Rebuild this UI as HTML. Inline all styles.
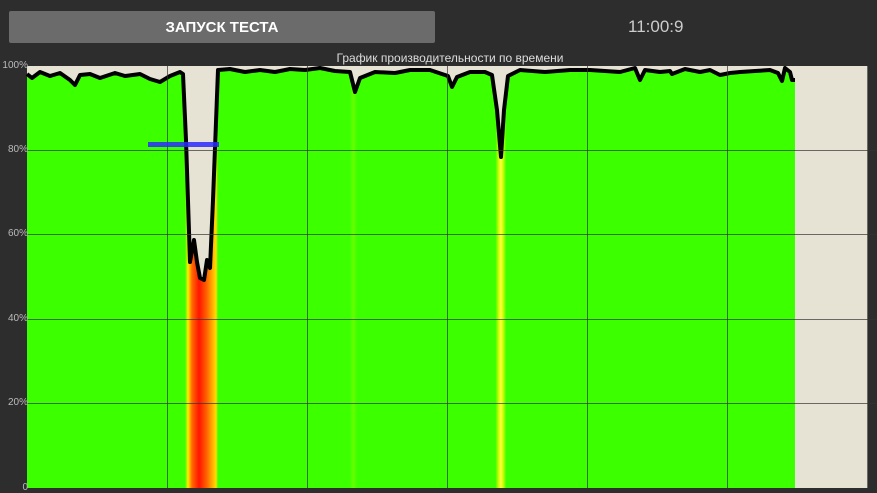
<!DOCTYPE html>
<html><head><meta charset="utf-8"><style>
html,body{margin:0;padding:0;background:#2d2d2d;width:877px;height:493px;overflow:hidden;font-family:"Liberation Sans","Noto Sans CJK SC",sans-serif}
.btn{position:absolute;left:9px;top:11px;width:426px;height:32px;background:#6b6b6b;border-radius:2px;color:#fff;font-weight:bold;font-size:15px;line-height:33px;text-align:center}
.time{position:absolute;left:628px;top:17px;color:#ccc;font-size:17px}
.title{position:absolute;left:0;width:900px;top:51px;text-align:center;color:#ddd;font-size:12px}
svg{position:absolute;left:0;top:0}
.lab{position:absolute;color:#bbb;font-size:10px;right:849px}
</style></head><body>
<div class="btn">ЗАПУСК ТЕСТА</div>
<div class="time">11:00:9</div>
<div class="title">График производительности по времени</div>
<svg width="877" height="493">
<defs>
<linearGradient id="g" x1="27" x2="795" gradientUnits="userSpaceOnUse">
<stop offset="0" stop-color="#3cff00"/>
<stop offset="0.2057" stop-color="#3cff00"/>
<stop offset="0.2096" stop-color="#ffee00"/>
<stop offset="0.2148" stop-color="#ff6a00"/>
<stop offset="0.2240" stop-color="#ff1500"/>
<stop offset="0.2330" stop-color="#ff5a00"/>
<stop offset="0.2461" stop-color="#ffdd00"/>
<stop offset="0.2487" stop-color="#3cff00"/>
<stop offset="0.42" stop-color="#3cff00"/>
<stop offset="0.425" stop-color="#66ff00"/>
<stop offset="0.43" stop-color="#3cff00"/>
<stop offset="0.610" stop-color="#3cff00"/>
<stop offset="0.614" stop-color="#ccff00"/>
<stop offset="0.617" stop-color="#ffff40"/>
<stop offset="0.620" stop-color="#ccff00"/>
<stop offset="0.624" stop-color="#3cff00"/>
<stop offset="1" stop-color="#3cff00"/>
</linearGradient>
</defs>
<rect x="27" y="66" width="841" height="422" fill="#e6e3d4"/>
<polygon fill="url(#g)" points="27,74 32,78 40,72 50,76 60,73 70,80 75,85 80,75 90,74 100,78 115,73 125,76 140,74 150,79 160,82 170,76 180,72 183,74 186,140 190,262 194,240 197,262 200,278 204,280 207,260 210,268 213,200 218,70 230,69 245,72 260,70 275,72 290,69 305,70 320,68 335,71 350,72 355,92 360,78 375,72 395,73 410,70 430,70 448,76 452,87 457,77 470,72 485,72 492,75 497,110 501,157 504,110 508,76 520,70 545,72 570,70 590,70 605,71 620,72 635,68 640,80 645,70 660,72 670,71 672,74 685,69 700,72 710,70 720,75 730,73 740,72 755,71 770,70 778,73 782,81 785,68 790,72 792,80 795,80 795,488 27,488"/>
<polyline fill="none" stroke="#000" stroke-width="4" stroke-linejoin="round" points="27,74 32,78 40,72 50,76 60,73 70,80 75,85 80,75 90,74 100,78 115,73 125,76 140,74 150,79 160,82 170,76 180,72 183,74 186,140 190,262 194,240 197,262 200,278 204,280 207,260 210,268 213,200 218,70 230,69 245,72 260,70 275,72 290,69 305,70 320,68 335,71 350,72 355,92 360,78 375,72 395,73 410,70 430,70 448,76 452,87 457,77 470,72 485,72 492,75 497,110 501,157 504,110 508,76 520,70 545,72 570,70 590,70 605,71 620,72 635,68 640,80 645,70 660,72 670,71 672,74 685,69 700,72 710,70 720,75 730,73 740,72 755,71 770,70 778,73 782,81 785,68 790,72 792,80 795,80"/>
<g stroke="#333" stroke-opacity="0.7" stroke-width="1">
<line x1="27" x2="877" y1="150.5" y2="150.5"/><line x1="27" x2="877" y1="234.5" y2="234.5"/><line x1="27" x2="877" y1="319.5" y2="319.5"/><line x1="27" x2="877" y1="403.5" y2="403.5"/>
<line x1="167.5" x2="167.5" y1="66" y2="488"/><line x1="307.5" x2="307.5" y1="66" y2="488"/><line x1="447.5" x2="447.5" y1="66" y2="488"/><line x1="587.5" x2="587.5" y1="66" y2="488"/><line x1="727.5" x2="727.5" y1="66" y2="488"/><line x1="867.5" x2="867.5" y1="66" y2="488"/>
</g>
<rect x="148" y="142" width="71" height="5" fill="#2a2aff" fill-opacity="0.85"/>
<rect x="0" y="488" width="877" height="5" fill="#2d2d2d"/>
</svg>
<div class="lab" style="top:60px">100%</div>
<div class="lab" style="top:144px">80%</div>
<div class="lab" style="top:228px">60%</div>
<div class="lab" style="top:313px">40%</div>
<div class="lab" style="top:397px">20%</div>
<div class="lab" style="top:482px">0</div>
</body></html>
